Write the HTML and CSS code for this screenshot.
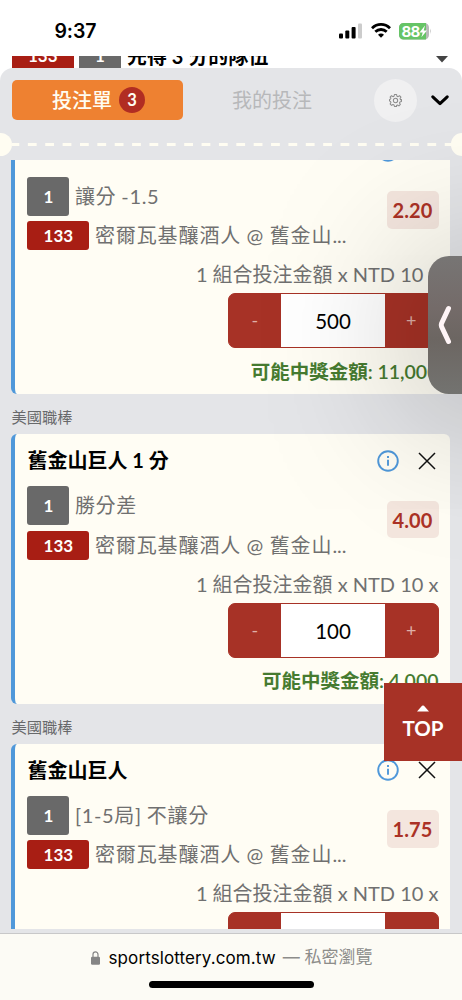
FILE: index.html
```html
<!DOCTYPE html>
<html lang="zh-Hant">
<head>
<meta charset="utf-8">
<meta name="viewport" content="width=device-width">
<title>投注單</title>
<link rel="stylesheet" href="styles.css">
</head>
<body>
<div class="phone">
  <header class="status">
    <span class="clock">9:37</span>
    <div class="status-icons">
      <svg class="signal" width="23" height="16" viewBox="0 0 23 16"><rect x="0" y="10.5" width="4" height="5" rx="1"/><rect x="6.3" y="7.5" width="4" height="8" rx="1"/><rect x="12.6" y="4" width="4" height="11.5" rx="1"/><rect x="19" y="0.5" width="4" height="15" rx="1" fill="#ccc"/></svg>
      <svg class="wifi" width="20" height="15" viewBox="0 0 20 15" fill="none" stroke="#000" stroke-width="2.8"><path d="M1 5.2C6.2.2 13.8.2 19 5.2M4.3 8.8C7.6 5.7 12.4 5.7 15.7 8.8"/><path d="M10 14.7L7 11.7C8.6 10.1 11.4 10.1 13 11.7Z" fill="#000" stroke="none"/></svg>
      <svg class="battery" width="33" height="17" viewBox="0 0 33 17"><path d="M4.5 0H25.500a4.500 4.500 0 0 1 4.500 4.500V12a4.500 4.500 0 0 1-4.500 4.500H4.500A4.500 4.500 0 0 1 0 12V4.500A4.500 4.500 0 0 1 4.500 0Z" fill="#b9b9b9"/><path d="M4.500 0H27V16.500H4.500A4.500 4.500 0 0 1 0 12V4.500A4.500 4.500 0 0 1 4.500 0Z" fill="#66c466"/><path d="M31.200 5.500Q32.800 8.200 31.200 11Z" fill="#b9b9b9"/><text x="2.500" y="13.700" class="battery-text">88</text><path d="M26 2.600L20.500 9.500H23.700L22.400 14.300L28 7.400H24.700Z" fill="#fff"/></svg>
    </div>
  </header>

  <div class="match">
    <span class="match-id">133</span><span class="match-one">1</span><span class="match-name">先得 3 分的隊伍</span>
    <svg class="match-caret" width="12" height="7" viewBox="0 0 12 7"><path d="M0 0H12L6 6.500Z" fill="#444"/></svg>
  </div>

  <main class="sheet">
    <nav class="tabs">
      <div class="tab active"><span>投注單</span><b class="count">3</b></div>
      <div class="tab">我的投注</div>
      <div class="gear"><svg width="13" height="13" viewBox="0 0 24 24" fill="none" stroke="#8b8b8b" stroke-width="1.900" stroke-linejoin="round"><path d="M10 1h4l.7 3.100 2 .8 2.700-1.700 2.600 2.600-1.600 2.700.8 2L23 10v4l-2.800.6-.8 2 1.600 2.700-2.700 2.700-2.600-1.700-2 .8L14 23h-4l-.7-2.900-2-.8L4.700 21 2 18.300l1.600-2.700-.8-2L1 13v-3l1.800-.6.8-2L2 5.800l2.700-2.600 2.600 1.700 2-.8Z"/><circle cx="12" cy="12" r="4"/></svg></div>
      <svg class="fold" width="18" height="11" viewBox="0 0 18 11"><path d="M1.800 1.800L9 8.700L16.200 1.800" fill="none" stroke="#000" stroke-width="3" stroke-linecap="round" stroke-linejoin="round"/></svg>
    </nav>
    <div class="perforation"><i class="notch"></i><svg class="dashes" width="440" height="3"><path d="M0 1.500H440" stroke="#fffdf2" stroke-width="3" stroke-dasharray="8.800 8.570" stroke-dashoffset="1.500"/></svg><i class="notch right"></i></div>

    <div class="list">
      <article class="card">
        <div class="card-head"><h2>舊金山巨人</h2>
          <svg class="info" width="22" height="22" viewBox="0 0 22 22"><circle cx="11" cy="11" r="9.800"/><path d="M11 9.800V15.700M11 6V8"/></svg>
          <svg class="close" width="18" height="18" viewBox="0 0 18 18"><path d="M1 1L17 17M17 1L1 17"/></svg></div>
        <div class="pick"><div class="lines">
          <div class="line"><span class="tag gray">1</span><span class="kind">讓分 -1.5</span></div>
          <div class="line"><span class="tag red">133</span><span class="teams">密爾瓦基釀酒人 @ 舊金山<span class="dots">...</span></span></div>
        </div><span class="odds">2.20</span></div>
        <div class="combo">1 組合投注金額 x NTD 10 x</div>
        <div class="stepper"><span class="step">-</span><span class="amount">500</span><span class="step">+</span></div>
        <div class="payout">可能中獎金額: 11,000</div>
      </article>
      <div class="league">美國職棒</div>
      <article class="card">
        <div class="card-head"><h2>舊金山巨人 1 分</h2>
          <svg class="info" width="22" height="22" viewBox="0 0 22 22"><circle cx="11" cy="11" r="9.800"/><path d="M11 9.800V15.700M11 6V8"/></svg>
          <svg class="close" width="18" height="18" viewBox="0 0 18 18"><path d="M1 1L17 17M17 1L1 17"/></svg></div>
        <div class="pick"><div class="lines">
          <div class="line"><span class="tag gray">1</span><span class="kind">勝分差</span></div>
          <div class="line"><span class="tag red">133</span><span class="teams">密爾瓦基釀酒人 @ 舊金山<span class="dots">...</span></span></div>
        </div><span class="odds">4.00</span></div>
        <div class="combo">1 組合投注金額 x NTD 10 x</div>
        <div class="stepper"><span class="step">-</span><span class="amount">100</span><span class="step">+</span></div>
        <div class="payout">可能中獎金額: 4,000</div>
      </article>
      <div class="league">美國職棒</div>
      <article class="card">
        <div class="card-head"><h2>舊金山巨人</h2>
          <svg class="info" width="22" height="22" viewBox="0 0 22 22"><circle cx="11" cy="11" r="9.800"/><path d="M11 9.800V15.700M11 6V8"/></svg>
          <svg class="close" width="18" height="18" viewBox="0 0 18 18"><path d="M1 1L17 17M17 1L1 17"/></svg></div>
        <div class="pick"><div class="lines">
          <div class="line"><span class="tag gray">1</span><span class="kind">[1-5局] 不讓分</span></div>
          <div class="line"><span class="tag red">133</span><span class="teams">密爾瓦基釀酒人 @ 舊金山<span class="dots">...</span></span></div>
        </div><span class="odds">1.75</span></div>
        <div class="combo">1 組合投注金額 x NTD 10 x</div>
        <div class="stepper"><span class="step"></span><span class="amount"></span><span class="step"></span></div>
      </article>
    </div>
  </main>

  <footer class="browser">
    <div class="address">
      <svg width="9" height="14" viewBox="0 0 9 14"><rect x="0" y="5.700" width="9" height="8" rx="1.300" fill="#858585"/><path d="M2 6.500V3.500a2.500 2.700 0 0 1 5 0V6.500" fill="none" stroke="#858585" stroke-width="1.200"/></svg>
      <span class="domain">sportslottery.com.tw</span><span class="private">— 私密瀏覽</span>
    </div>
    <div class="home"></div>
  </footer>

  <div class="handle"><svg width="14" height="40" viewBox="0 0 14 40"><path d="M10.500 3.500L3.500 18.500Q3 20 3.500 21.500L10.500 36.500" fill="none" stroke="#fff5f7" stroke-width="5" stroke-linecap="round" stroke-linejoin="round"/></svg></div>
  <div class="top"><svg width="12" height="7" viewBox="0 0 12 7"><path d="M0 6.500L5 .8Q6 0 7 .8L12 6.500Z" fill="#fff"/></svg><span>TOP</span></div>
</div>
</body>
</html>
```
FILE: styles.css
```css
* { box-sizing: border-box; }
body { margin: 0; background: #fff; font-family: Lato, "Noto Sans CJK TC", sans-serif; color: #000; }
.phone { position: relative; width: 462px; height: 1000px; overflow: hidden; display: flex; flex-direction: column; }

.status { height: 56px; flex: none; display: flex; justify-content: space-between; padding: 0 30px 0 54.500px; background: #fff; }
.clock { font: 600 19.500px/23px Inter, sans-serif; letter-spacing: -.1px; padding-top: 20px; }
.status-icons { display: flex; align-items: flex-start; padding-top: 22.500px; }
.wifi { margin-left: 9px; }
.battery { margin-left: 8.500px; }
.battery-text { font: 700 15px Inter, sans-serif; fill: #fff; letter-spacing: -.7px; }

.match { height: 12px; flex: none; overflow: hidden; display: flex; align-items: flex-start; padding: 0 14px 0 11.500px; }
.match-id, .match-one { height: 24px; line-height: 24px; margin-top: -12px; color: #fff; font-weight: 700; font-size: 17px; text-align: center; }
.match-id { width: 62.500px; background: #a81e14; }
.match-one { width: 42px; margin-left: 5px; background: #696969; }
.match-name { margin: -15px 0 0 6px; font-size: 20px; line-height: 30px; font-weight: 700; white-space: nowrap; }
.match-caret { margin-left: auto; }

.sheet { height: 865px; flex: none; border-radius: 13px 13px 0 0; background: #e4e5e8; overflow: hidden; display: flex; flex-direction: column; }
.tabs { height: 64px; flex: none; display: flex; align-items: center; padding: 0 13px 0 11.500px; }
.tab { width: 171px; height: 40.500px; display: flex; align-items: center; justify-content: center; font-size: 20px; line-height: 28px; color: #b7b8ba; padding: 0 0 1px 8px; }
.tab.active { background: #ee8131; color: #fffdf2; border-radius: 5px; font-weight: 500; gap: 7px; padding-left: 3px; }
.count { width: 26px; height: 26px; border-radius: 50%; background: #b12d22; color: #fffdf2; font-size: 16.500px; line-height: 26px; text-align: center; }
.gear { width: 43px; height: 43px; margin-left: 20.500px; border-radius: 50%; background: #f0f0f1; display: flex; align-items: center; justify-content: center; }
.fold { margin-left: auto; }
.perforation { height: 24px; flex: none; display: flex; align-items: center; justify-content: space-between; }
.notch { width: 11.500px; height: 23px; border-radius: 0 12px 12px 0; background: #fffdf2; flex: none; }
.notch.right { border-radius: 12px 0 0 12px; }
.dashes { flex: 1; margin-top: 1px; }

.list { height: 769px; margin-top: 4px; overflow: hidden; padding: 0 12px 0 11.400px; flex: none; }
.card { height: 269.500px; border-left: 4.500px solid #4f98da; border-radius: 6px; background: #fffdf4; padding: 12px 11.500px 0 12px; }
.card:first-child { margin-top: -35.700px; }
.card-head { height: 29px; display: flex; align-items: center; }
.card-head h2 { margin: -1px 0 0; font-size: 20px; line-height: 28px; font-weight: 700; flex: 1; }
.card:first-child h2 { margin-top: -3px; }
.info { fill: none; stroke: #4f98da; stroke-width: 1.900; }
.close { margin: 0 3px 0 19px; fill: none; stroke: #111; stroke-width: 1.500; }
.pick { display: flex; justify-content: space-between; padding-top: 11.300px; }
.lines { display: flex; flex-direction: column; gap: 5.500px; }
.line { display: flex; align-items: center; gap: 5.500px; color: #707070; font-size: 20px; white-space: nowrap; }
.tag { color: #fff; font-weight: 700; font-size: 17px; border-radius: 3px; display: flex; align-items: center; justify-content: center; }
.tag.gray { width: 42px; height: 39px; background: #696969; }
.tag.red { width: 62px; height: 29px; background: #a81e14; }
.kind, .teams { line-height: 28px; margin-top: -1px; letter-spacing: .9px; word-spacing: -.6px; }
.kind { letter-spacing: .65px; }
.dots { letter-spacing: 0; }
.odds { width: 52px; height: 37.500px; margin-top: 14.500px; border-radius: 5px; background: #f4e6de; color: #ab3226; font-size: 20px; font-weight: 700; line-height: 38px; text-align: center; letter-spacing: .1px; }
.combo { height: 28px; margin-top: 10px; line-height: 28px; font-size: 20px; text-align: right; color: #707070; white-space: nowrap; }
.stepper { width: 211px; height: 55px; margin: 5px 0 0 auto; border: 1px solid #a73226; border-radius: 7px; overflow: hidden; display: flex; background: #a73226; }
.step { width: 52.500px; line-height: 53px; text-align: center; color: #dfb0a8; font-size: 18px; }
.amount { width: 104px; background: #fff; line-height: 54px; text-align: center; font-size: 20.500px; }
.payout { height: 28px; margin-top: 9.500px; line-height: 28px; text-align: right; color: #467b30; font-size: 19.500px; font-weight: 600; white-space: nowrap; }
.league { height: 40.200px; font-size: 15.300px; line-height: 46px; color: #68696b; }

.browser { height: 67px; flex: none; background: #fcfbf5; border-top: 1px solid #c8c8c9; display: flex; flex-direction: column; align-items: center; }
.address { height: 47px; display: flex; align-items: center; padding-left: 1px; font: 17px/24px Inter, "Noto Sans CJK TC", sans-serif; }
.domain { margin-left: 9px; letter-spacing: .1px; }
.private { margin-left: 7px; margin-top: -1px; color: #8c8c8a; }
.home { width: 165px; height: 7px; border-radius: 4px; background: #000; }

.handle { position: absolute; left: 427.500px; top: 255.500px; width: 120px; height: 138px; border-radius: 21px; background: linear-gradient(#777574, #746b69 38%, #6c6662 60%, #737370); box-shadow: 0 10px 160px rgba(0,0,0,.37); padding: 49px 0 0 10.500px; }
.top { position: absolute; left: 384px; top: 682.500px; width: 78px; height: 78px; background: #a73226; color: #fff; display: flex; flex-direction: column; align-items: center; padding-top: 22px; font-size: 20.500px; font-weight: 700; line-height: 33px; }
```
